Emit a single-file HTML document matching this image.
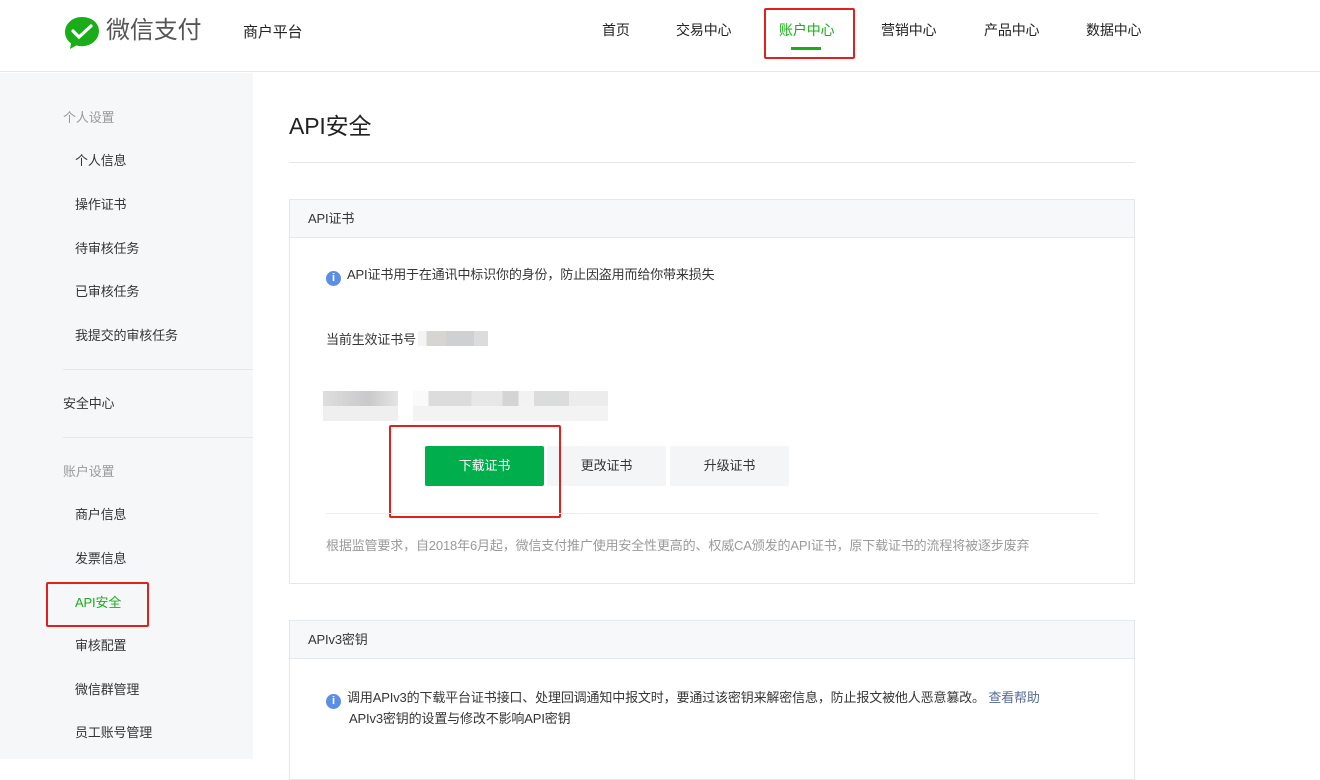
<!DOCTYPE html>
<html><head><meta charset="utf-8"><style>
*{margin:0;padding:0;box-sizing:border-box}
body{width:1320px;height:759px;overflow:hidden;background:#fff;font-family:"Liberation Sans","Noto Sans CJK SC",sans-serif;font-size:13px;line-height:1.2;color:#353535;position:relative;letter-spacing:-0.15px}
.abs{position:absolute}
.hdr{position:absolute;left:0;top:0;width:1320px;height:72px;border-bottom:1px solid #e7e7eb;background:#fff}
.nav{position:absolute;top:22px;font-size:14px;color:#222}
.side{position:absolute;left:0;top:73px;width:253px;height:686px;background:#f6f7f9}
.si{position:absolute;font-size:13px;color:#353535}
.sg{position:absolute;font-size:13px;color:#9a9a9a}
.box{position:absolute;left:289px;border:1px solid #e4e8eb;background:#fff}
.bh{height:38px;background:#f6f8f9;border-bottom:1px solid #e4e8eb;padding:11px 18px;font-size:13px}
.info{display:inline-block;width:15px;height:15px;border-radius:50%;background:#5b8ee6;color:#fff;font-size:11px;text-align:center;line-height:15px;font-weight:bold;vertical-align:-2px;margin-right:6px}
.btn{position:absolute;top:446px;height:40px;width:119px;font-size:13px;text-align:center;line-height:40px;border-radius:2px}
.red{position:absolute;border:2px solid #e0211d;border-radius:2px}
.blur{position:absolute;height:15px}
</style></head><body>
<div class="hdr">
 <svg class="abs" style="left:64px;top:16px" width="36" height="34" viewBox="0 0 36 34"><path d="M18 1C8.6 1 1 7.7 1 16c0 4.6 2.4 8.7 6 11.4L6 33l6.5-3.6c1.7.5 3.6.8 5.5.8 9.4 0 17-6.9 17-15.2S27.4 1 18 1z" fill="#1aad19"/><path d="M9 15l6 6 12-11" stroke="#fff" stroke-width="3.2" fill="none" stroke-linecap="round"/></svg>
 <div class="abs" style="left:106px;top:17px;font-size:24px;color:#555">微信支付</div>
 <div class="abs" style="left:243px;top:24px;font-size:15px;color:#222">商户平台</div>
 <div class="nav" style="left:602px">首页</div>
 <div class="nav" style="left:676px">交易中心</div>
 <div class="nav" style="left:779px;color:#1aad19">账户中心</div>
 <div class="abs" style="left:791px;top:47px;width:30px;height:3px;background:#1aad19"></div>
 <div class="red" style="left:764px;top:8px;width:91px;height:51px"></div>
 <div class="nav" style="left:881px">营销中心</div>
 <div class="nav" style="left:984px">产品中心</div>
 <div class="nav" style="left:1086px">数据中心</div>
</div>
<div class="side">
 <div class="sg" style="left:63px;top:37px">个人设置</div>
 <div class="si" style="left:75px;top:80px">个人信息</div>
 <div class="si" style="left:75px;top:124px">操作证书</div>
 <div class="si" style="left:75px;top:168px">待审核任务</div>
 <div class="si" style="left:75px;top:211px">已审核任务</div>
 <div class="si" style="left:75px;top:255px">我提交的审核任务</div>
 <div class="abs" style="left:63px;top:296px;width:190px;height:1px;background:#e4e8eb"></div>
 <div class="si" style="left:63px;top:323px">安全中心</div>
 <div class="abs" style="left:63px;top:364px;width:190px;height:1px;background:#e4e8eb"></div>
 <div class="sg" style="left:63px;top:391px">账户设置</div>
 <div class="si" style="left:75px;top:434px">商户信息</div>
 <div class="si" style="left:75px;top:478px">发票信息</div>
 <div class="si" style="left:75px;top:522px;color:#1aad19">API安全</div>
 <div class="red" style="left:46px;top:509px;width:103px;height:45px"></div>
 <div class="si" style="left:75px;top:565px">审核配置</div>
 <div class="si" style="left:75px;top:609px">微信群管理</div>
 <div class="si" style="left:75px;top:652px">员工账号管理</div>
</div>
<div class="abs" style="left:289px;top:113px;font-size:23px;color:#222">API安全</div>
<div class="abs" style="left:289px;top:162px;width:846px;height:1px;background:#e4e8eb"></div>
<div class="box" style="top:199px;width:846px;height:385px">
 <div class="bh">API证书</div>
</div>
<div class="abs" style="left:326px;top:267px"><span class="info">i</span>API证书用于在通讯中标识你的身份，防止因盗用而给你带来损失</div>
<div class="abs" style="left:326px;top:332px">当前生效证书号</div>
<div class="blur" style="left:418px;top:331px;width:70px;background:linear-gradient(90deg,#f4f4f4 0 12%,#d6d5d2 12% 40%,#cfd0d2 40% 80%,#dcdcdf 80%)"></div>
<div class="blur" style="left:323px;top:391px;width:75px;background:linear-gradient(90deg,#dedede,#c9c9cb 60%,#e4e4e4)"></div>
<div class="blur" style="left:323px;top:406px;width:75px;background:#efefef"></div>
<div class="blur" style="left:413px;top:391px;width:195px;background:linear-gradient(90deg,#fafafa 0 8%,#dcdcdc 8% 30%,#e7e7e7 30% 46%,#d4d4d4 46% 54%,#f2f2f2 54% 62%,#dbdcdc 62% 80%,#ececec 80%)"></div>
<div class="blur" style="left:413px;top:406px;width:195px;background:#f3f3f3"></div>
<div class="btn" style="left:425px;background:#00ae4c;color:#fff">下载证书</div>
<div class="btn" style="left:547px;background:#f4f5f7;color:#353535">更改证书</div>
<div class="btn" style="left:670px;background:#f4f5f7;color:#353535">升级证书</div>
<div class="red" style="left:389px;top:425px;width:172px;height:93px"></div>
<div class="abs" style="left:326px;top:513px;width:772px;height:1px;background:#eceef0"></div>
<div class="abs" style="left:326px;top:538px;color:#9a9a9a">根据监管要求，自2018年6月起，微信支付推广使用安全性更高的、权威CA颁发的API证书，原下载证书的流程将被逐步废弃</div>
<div class="box" style="top:620px;width:846px;height:160px">
 <div class="bh">APIv3密钥</div>
</div>
<div class="abs" style="left:326px;top:688px;line-height:20px"><span class="info">i</span>调用APIv3的下载平台证书接口、处理回调通知中报文时，要通过该密钥来解密信息，防止报文被他人恶意篡改。 <span style="color:#576b95">查看帮助</span><br><span style="padding-left:23px">APIv3密钥的设置与修改不影响API密钥</span></div>
</body></html>
